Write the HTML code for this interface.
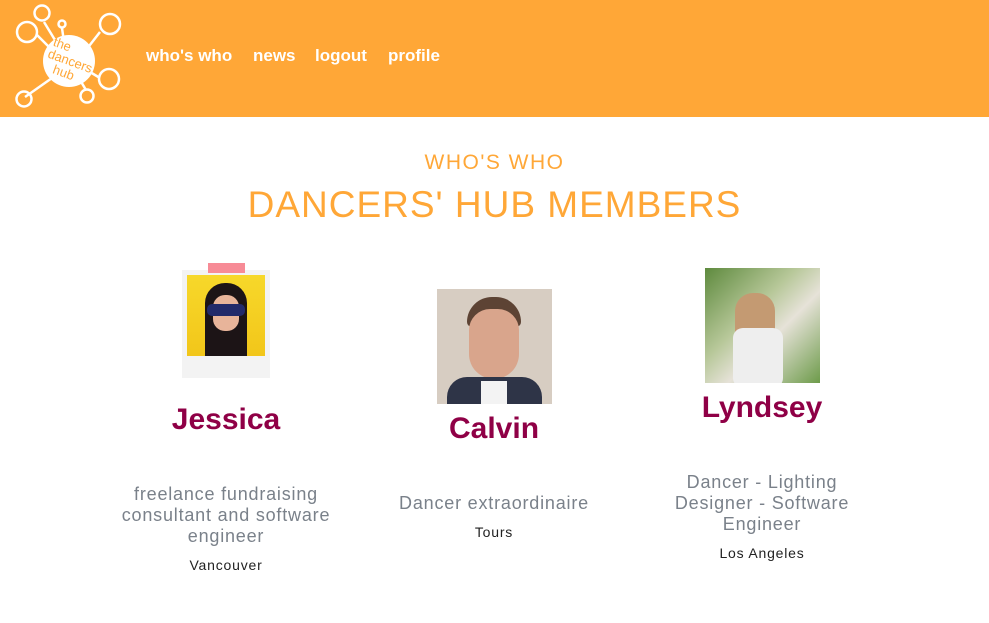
<!DOCTYPE html>
<html><head><meta charset="utf-8"><style>
*{margin:0;padding:0;box-sizing:border-box}
body{width:989px;height:623px;background:#fff;font-family:"Liberation Sans",sans-serif;position:relative;overflow:hidden}
.hdr{position:absolute;left:0;top:0;width:989px;height:117px;background:#FFA737}
.nav{position:absolute;top:46px;color:#fff;font-weight:bold;font-size:17px}
.c{position:absolute;text-align:center}
.name{color:#8F0046;font-weight:bold;font-size:30px}
.desc{color:#7a818a;font-size:18px;line-height:21px;letter-spacing:0.8px}
.city{color:#222;font-size:14px;letter-spacing:0.8px}
</style></head><body>
<div class="hdr">
<svg width="130" height="115" viewBox="0 0 130 115" style="position:absolute;left:0;top:0">
<g stroke="#fff" stroke-width="2.5" fill="none">
<line x1="44" y1="22" x2="58" y2="45"/><line x1="62" y1="28" x2="64" y2="42"/>
<line x1="37" y1="35" x2="52" y2="50"/><line x1="100" y1="32" x2="86" y2="50"/>
<line x1="25" y1="97" x2="52" y2="78"/><line x1="86" y1="90" x2="80" y2="80"/>
<line x1="100" y1="78" x2="90" y2="72"/>
<circle cx="42" cy="13" r="7.5"/><circle cx="62" cy="24" r="3.5"/>
<circle cx="27" cy="32" r="10"/><circle cx="110" cy="24" r="10"/>
<circle cx="109" cy="79" r="10"/><circle cx="87" cy="96" r="6.5"/>
<circle cx="24" cy="99" r="7.5"/>
</g>
<circle cx="69" cy="61" r="26" fill="#fff"/>
<g fill="#FFA737" font-size="13" font-family="Liberation Sans,sans-serif" transform="rotate(20 69 61)">
<text x="48" y="52">the</text><text x="47" y="65">dancers</text><text x="57" y="78">hub</text></g>
</svg>
<div class="nav" style="left:146px">who's who</div>
<div class="nav" style="left:253px">news</div>
<div class="nav" style="left:315px">logout</div>
<div class="nav" style="left:388px">profile</div>
</div>
<div class="c" style="left:0;width:989px;top:151px;color:#FFA737;font-size:21px;letter-spacing:1.5px">WHO'S WHO</div>
<div class="c" style="left:0;width:989px;top:184px;color:#FFA737;font-size:37px;letter-spacing:1px">DANCERS' HUB MEMBERS</div>

<div style="position:absolute;left:182px;top:270px;width:88px;height:108px;background:#f3f3f3"></div>
<div style="position:absolute;left:187px;top:275px;width:78px;height:81px;background:linear-gradient(#f7d82a,#f2c61a);overflow:hidden">
<div style="position:absolute;left:18px;top:8px;width:42px;height:80px;background:#1c1416;border-radius:20px 20px 0 0"></div>
<div style="position:absolute;left:26px;top:20px;width:26px;height:36px;background:#e8b49a;border-radius:12px"></div>
<div style="position:absolute;left:20px;top:29px;width:38px;height:12px;background:#222a6a;border-radius:5px"></div>
</div>
<div style="position:absolute;left:208px;top:263px;width:37px;height:10px;background:#f78b96"></div>

<div style="position:absolute;left:437px;top:289px;width:115px;height:115px;background:#d7cdc2;overflow:hidden">
<div style="position:absolute;left:30px;top:8px;width:54px;height:30px;background:#5d4334;border-radius:25px 25px 5px 5px"></div>
<div style="position:absolute;left:32px;top:20px;width:50px;height:70px;background:#d9a58c;border-radius:22px 22px 26px 26px"></div>
<div style="position:absolute;left:10px;top:88px;width:95px;height:40px;background:#2e3447;border-radius:20px 20px 0 0"></div>
<div style="position:absolute;left:44px;top:92px;width:26px;height:30px;background:#f3f3f3"></div>
</div>

<div style="position:absolute;left:705px;top:268px;width:115px;height:115px;background:linear-gradient(135deg,#5e8a3e,#b8c89a 40%,#e6e2d8 60%,#6d9b4a);overflow:hidden">
<div style="position:absolute;left:30px;top:25px;width:40px;height:95px;background:#c49a72;border-radius:18px 18px 0 0"></div>
<div style="position:absolute;left:28px;top:60px;width:50px;height:60px;background:#eee;border-radius:10px"></div>
</div>

<div class="c name" style="left:126px;width:200px;top:403px">Jessica</div>
<div class="c name" style="left:394px;width:200px;top:412px">Calvin</div>
<div class="c name" style="left:662px;width:200px;top:391px">Lyndsey</div>

<div class="c desc" style="left:106px;width:240px;top:484px">freelance fundraising consultant and software engineer</div>
<div class="c city" style="left:126px;width:200px;top:557px">Vancouver</div>
<div class="c desc" style="left:364px;width:260px;top:493px">Dancer extraordinaire</div>
<div class="c city" style="left:394px;width:200px;top:524px">Tours</div>
<div class="c desc" style="left:667px;width:190px;top:472px">Dancer - Lighting Designer - Software Engineer</div>
<div class="c city" style="left:662px;width:200px;top:545px">Los Angeles</div>
</body></html>
